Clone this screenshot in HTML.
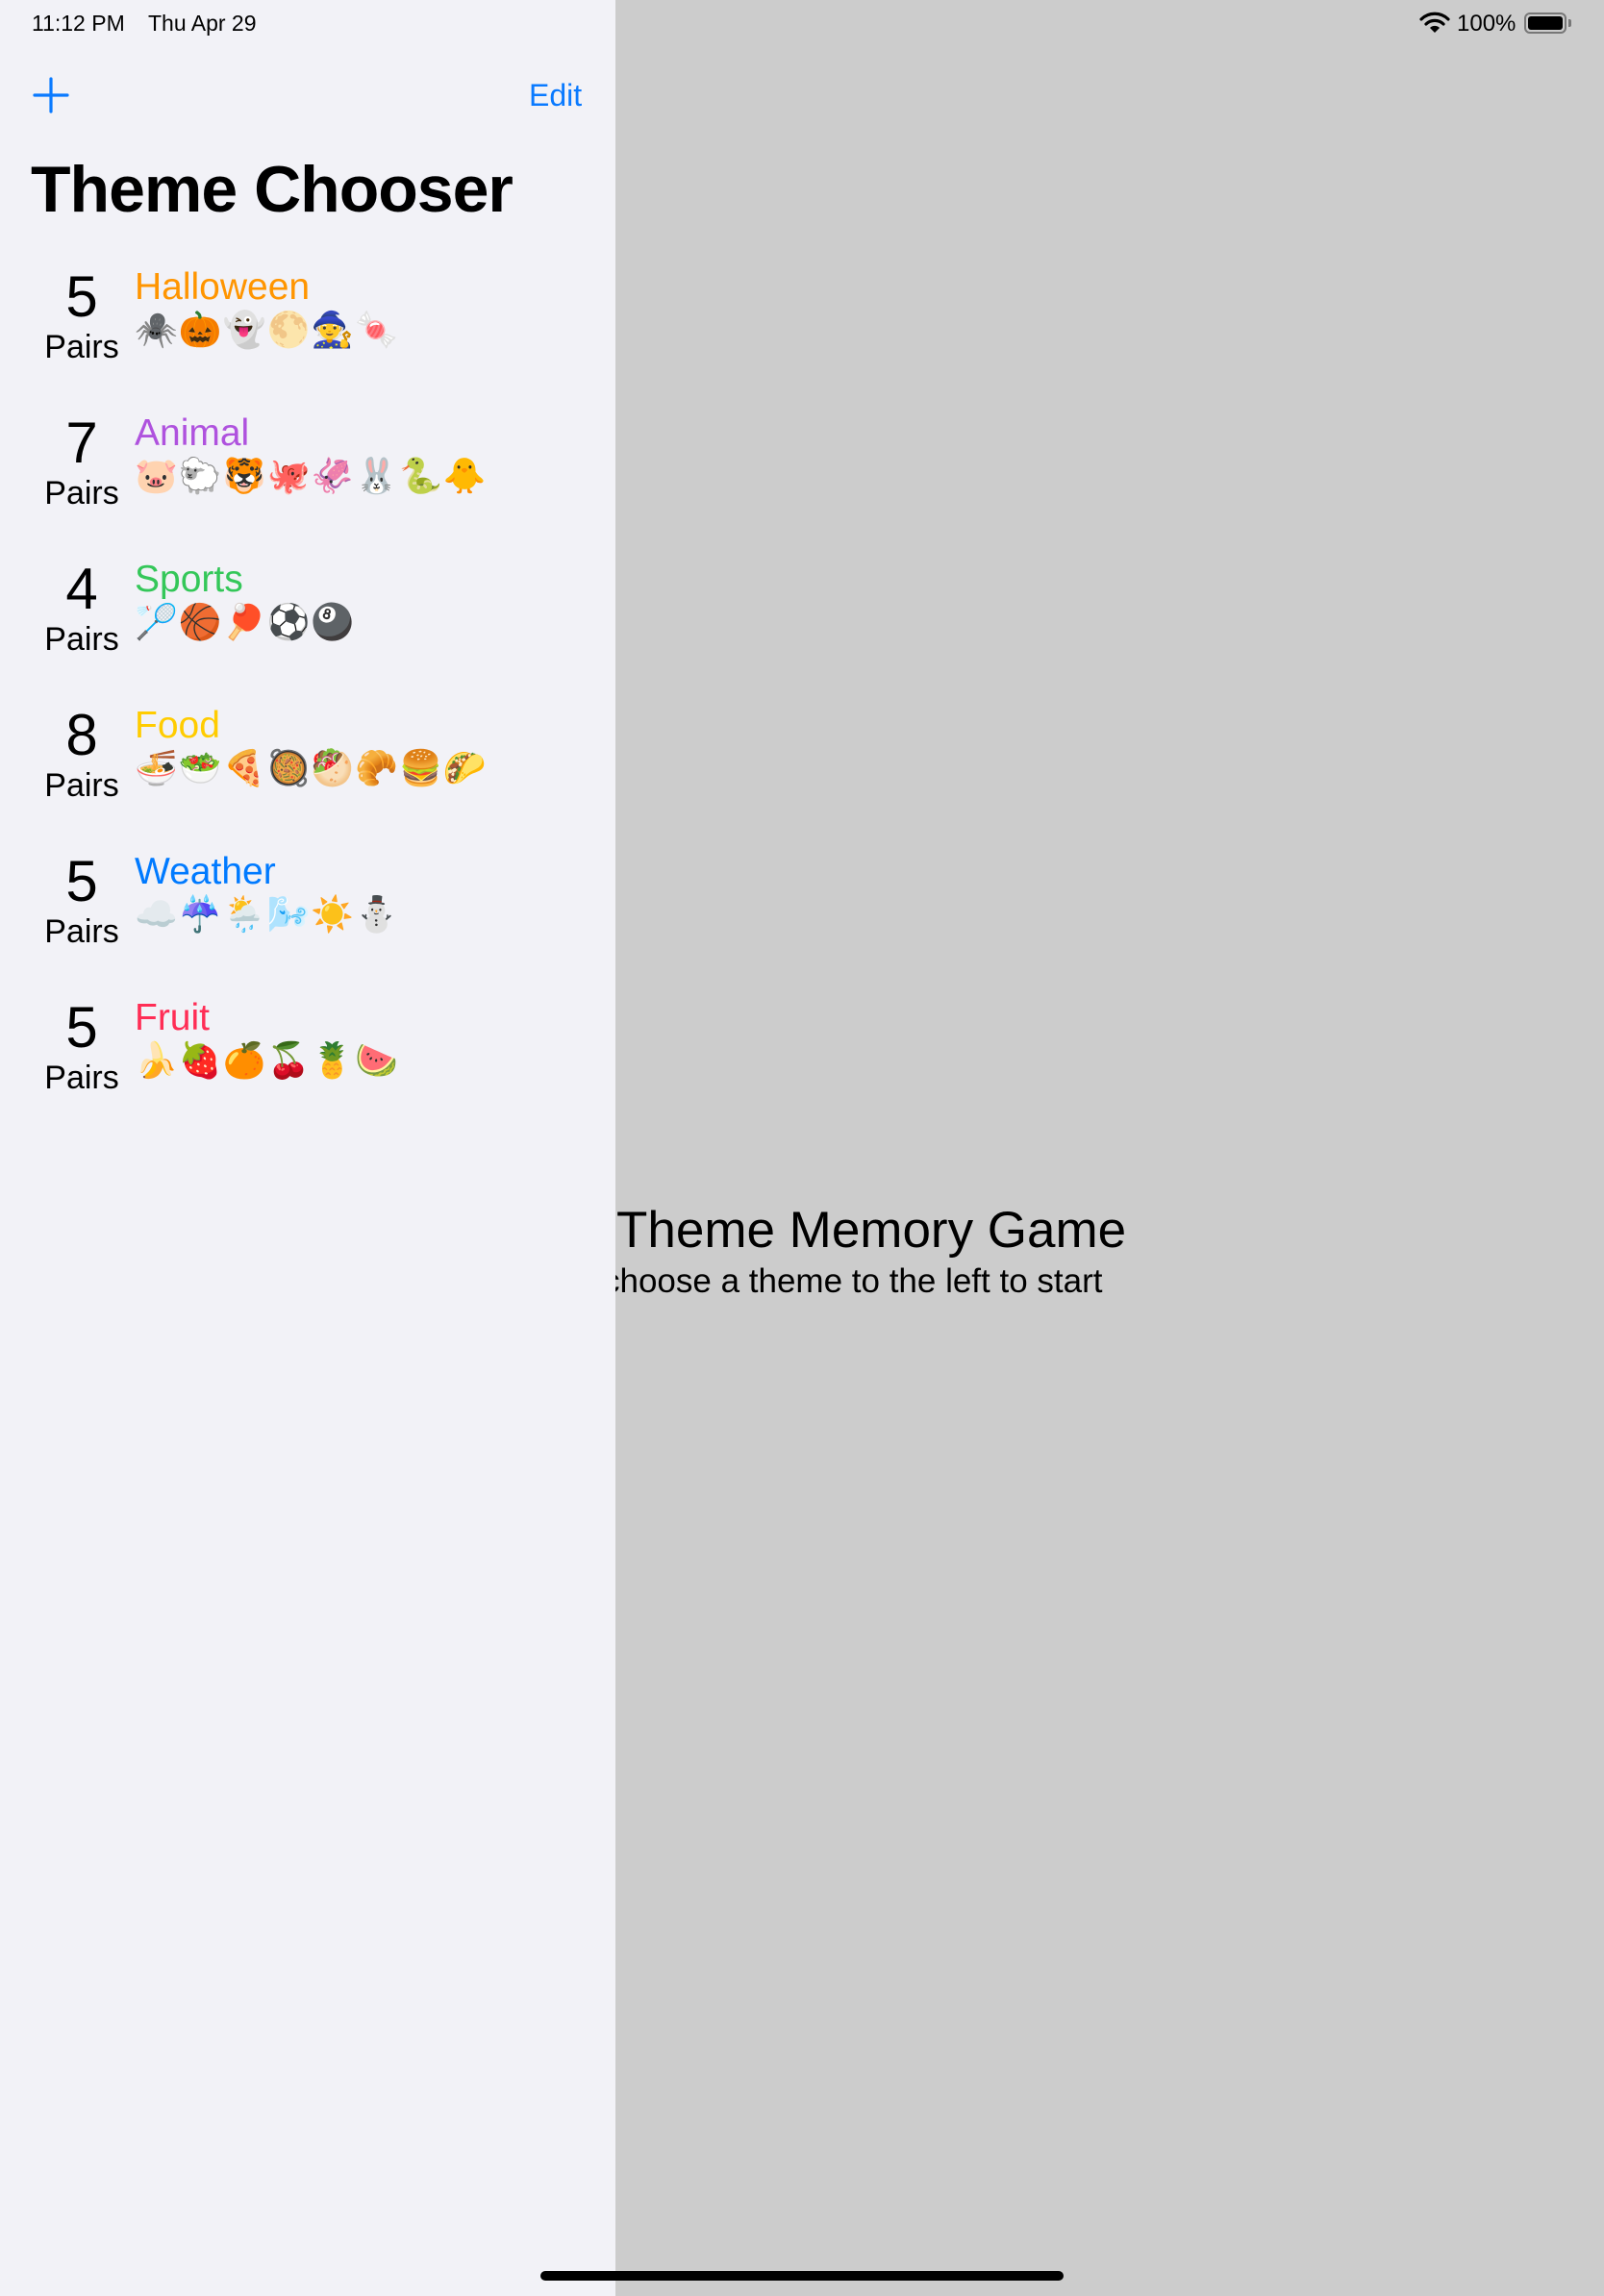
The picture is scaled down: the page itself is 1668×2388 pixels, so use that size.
<!DOCTYPE html>
<html><head><meta charset="utf-8"><style>
*{margin:0;padding:0;box-sizing:border-box}
html,body{width:1668px;height:2388px;overflow:hidden;background:#cccccc;font-family:"Liberation Sans","DejaVu Sans",sans-serif;}
.a{position:absolute;line-height:1;white-space:nowrap}
#side{position:absolute;left:0;top:0;width:640px;height:2388px;background:#f2f2f7}
#right{position:absolute;left:640px;top:0;width:1028px;height:2388px;overflow:hidden}
.num{font-size:60px;width:100px;left:35px;text-align:center;color:#000}
.pairs{font-size:34px;width:120px;left:25px;text-align:center;color:#000}
.ttl{font-size:39px;left:140px}
.em{font-size:36px;left:140px;letter-spacing:1px;font-family:"Noto Color Emoji","DejaVu Sans",sans-serif}
</style></head><body>
<div id="side">
<div class="a" style="left:33px;top:13px;font-size:23px">11:12 PM</div>
<div class="a" style="left:154px;top:13px;font-size:23px">Thu Apr 29</div>
<svg class="a" style="left:34px;top:80px" width="38" height="38"><path d="M19 2V36M2 19H36" stroke="#0a7aff" stroke-width="3.2" stroke-linecap="round"/></svg>
<div class="a" style="left:550px;top:83px;font-size:32px;color:#0a7aff">Edit</div>
<div class="a" style="left:32px;top:163px;font-size:68px;font-weight:bold;letter-spacing:-1px">Theme Chooser</div>

<div class="a num" style="top:279px">5</div>
<div class="a pairs" style="top:344px">Pairs</div>
<div class="a ttl" style="top:279px;color:#ff9500">Halloween</div>
<div class="a em" style="top:325px">🕷🎃👻🌕🧙🍬</div>

<div class="a num" style="top:431px">7</div>
<div class="a pairs" style="top:496px">Pairs</div>
<div class="a ttl" style="top:431px;color:#af52de">Animal</div>
<div class="a em" style="top:477px">🐷🐑🐯🐙🦑🐰🐍🐥</div>

<div class="a num" style="top:583px">4</div>
<div class="a pairs" style="top:648px">Pairs</div>
<div class="a ttl" style="top:583px;color:#34c759">Sports</div>
<div class="a em" style="top:629px">🏸🏀🏓⚽🎱</div>

<div class="a num" style="top:735px">8</div>
<div class="a pairs" style="top:800px">Pairs</div>
<div class="a ttl" style="top:735px;color:#ffcc00">Food</div>
<div class="a em" style="top:781px">🍜🥗🍕🥘🥙🥐🍔🌮</div>

<div class="a num" style="top:887px">5</div>
<div class="a pairs" style="top:952px">Pairs</div>
<div class="a ttl" style="top:887px;color:#007aff">Weather</div>
<div class="a em" style="top:933px">☁️☔🌦🌬☀️⛄</div>

<div class="a num" style="top:1039px">5</div>
<div class="a pairs" style="top:1104px">Pairs</div>
<div class="a ttl" style="top:1039px;color:#ff2d55">Fruit</div>
<div class="a em" style="top:1085px">🍌🍓🍊🍒🍍🍉</div>
</div>

<div id="right">
<div class="a" style="left:1px;top:1253px;font-size:53px;color:#000">Theme Memory Game</div>
<div class="a" style="left:-13px;top:1315px;font-size:35px;color:#000">choose a theme to the left to start</div>
</div>

<svg class="a" style="left:1476px;top:12px" width="32" height="24" viewBox="0 0 32 24">
<path d="M2 8 A20 20 0 0 1 30 8" stroke="#000" stroke-width="3.2" fill="none" stroke-linecap="round"/>
<path d="M7 13 A13 13 0 0 1 25 13" stroke="#000" stroke-width="3.2" fill="none" stroke-linecap="round"/>
<path d="M16 22 L11 17 A7 7 0 0 1 21 17 Z" fill="#000"/>
</svg>
<div class="a" style="left:1515px;top:13px;font-size:24px">100%</div>
<div class="a" style="left:1585px;top:13px;width:44px;height:22px;border:2px solid #777;border-radius:6px;padding:2px"><div style="width:100%;height:100%;background:#000;border-radius:3px"></div></div>
<div class="a" style="left:1631px;top:20px;width:3px;height:8px;background:#777;border-radius:0 2px 2px 0"></div>

<div class="a" style="left:562px;top:2362px;width:544px;height:10px;background:#000;border-radius:5px"></div>
</body></html>
